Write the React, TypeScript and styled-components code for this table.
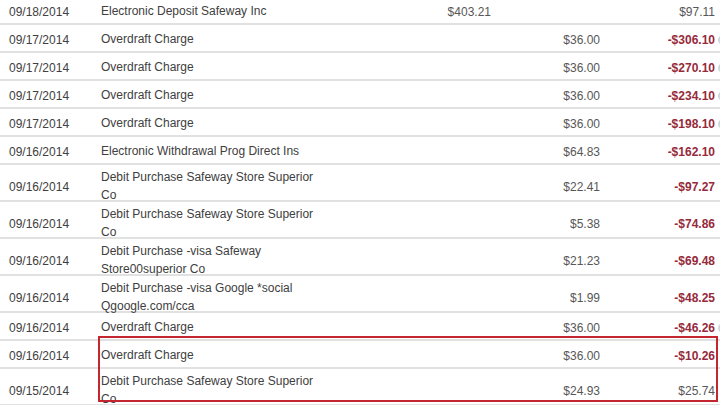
import React from "react";
import styled, { createGlobalStyle } from "styled-components";

const GlobalStyle = createGlobalStyle`
  html, body {
    margin: 0;
    padding: 0;
    background: #ffffff;
    overflow: hidden;
  }
  body {
    width: 720px;
    height: 405px;
    font-family: "Liberation Sans", Arial, sans-serif;
  }
`;

const Ledger = styled.div`
  width: 730px;
  margin-top: -3px;
  font-size: 12px;
  color: #404040;
`;

const Row = styled.div<{ $tall?: boolean }>`
  display: grid;
  grid-template-columns: 101px 222px 168px 109px 115px 15px;
  align-items: center;
  box-sizing: border-box;
  padding-top: 4px;
  height: ${(p) => (p.$tall ? "37px" : "28px")};
  border-bottom: 2px solid #e1e1e1;
`;

const DateCell = styled.div`
  padding-left: 9px;
`;

const DescCell = styled.div`
  line-height: 17.5px;
`;

const Amount = styled.div`
  text-align: right;
  color: #575757;
`;

const Balance = styled.div<{ $neg?: boolean }>`
  text-align: right;
  color: ${(p) => (p.$neg ? "#962a3a" : "#575757")};
  font-weight: ${(p) => (p.$neg ? 700 : 400)};
`;

const InfoDot = styled.span`
  display: block;
  width: 10px;
  height: 10px;
  margin-left: 3px;
  border-radius: 50%;
  background: #cfd8dc;
`;

const Highlight = styled.div`
  position: relative;
`;

const RedBox = styled.div`
  position: absolute;
  top: -5px;
  left: 98px;
  width: 620px;
  bottom: 4px;
  border: 2px solid #c3262e;
  box-sizing: border-box;
  pointer-events: none;
`;

type Tx = {
  date: string;
  desc: string;
  credit?: string;
  debit?: string;
  balance: string;
  tall?: boolean;
  dot?: boolean;
};

const rows: Tx[] = [
  { date: "09/18/2014", desc: "Electronic Deposit Safeway Inc", credit: "$403.21", balance: "$97.11" },
  { date: "09/17/2014", desc: "Overdraft Charge", debit: "$36.00", balance: "-$306.10", dot: true },
  { date: "09/17/2014", desc: "Overdraft Charge", debit: "$36.00", balance: "-$270.10", dot: true },
  { date: "09/17/2014", desc: "Overdraft Charge", debit: "$36.00", balance: "-$234.10", dot: true },
  { date: "09/17/2014", desc: "Overdraft Charge", debit: "$36.00", balance: "-$198.10", dot: true },
  { date: "09/16/2014", desc: "Electronic Withdrawal Prog Direct Ins", debit: "$64.83", balance: "-$162.10" },
  { date: "09/16/2014", desc: "Debit Purchase Safeway Store Superior Co", debit: "$22.41", balance: "-$97.27", tall: true },
  { date: "09/16/2014", desc: "Debit Purchase Safeway Store Superior Co", debit: "$5.38", balance: "-$74.86", tall: true },
  { date: "09/16/2014", desc: "Debit Purchase -visa Safeway Store00superior Co", debit: "$21.23", balance: "-$69.48", tall: true },
  { date: "09/16/2014", desc: "Debit Purchase -visa Google *social Qgoogle.com/cca", debit: "$1.99", balance: "-$48.25", tall: true },
  { date: "09/16/2014", desc: "Overdraft Charge", debit: "$36.00", balance: "-$46.26", dot: true },
];

const highlighted: Tx[] = [
  { date: "09/16/2014", desc: "Overdraft Charge", debit: "$36.00", balance: "-$10.26" },
  { date: "09/15/2014", desc: "Debit Purchase Safeway Store Superior Co", debit: "$24.93", balance: "$25.74", tall: true },
];

const TxRow = ({ tx }: { tx: Tx }) => (
  <Row $tall={tx.tall}>
    <DateCell>{tx.date}</DateCell>
    <DescCell>{tx.desc}</DescCell>
    <Amount>{tx.credit ?? ""}</Amount>
    <Amount>{tx.debit ?? ""}</Amount>
    <Balance $neg={tx.balance.startsWith("-")}>{tx.balance}</Balance>
    <div>{tx.dot ? <InfoDot /> : null}</div>
  </Row>
);

export default function App() {
  return (
    <>
      <GlobalStyle />
      <Ledger>
        {rows.map((tx, i) => (
          <TxRow key={i} tx={tx} />
        ))}
        <Highlight>
          {highlighted.map((tx, i) => (
            <TxRow key={i} tx={tx} />
          ))}
          <RedBox />
        </Highlight>
      </Ledger>
    </>
  );
}
